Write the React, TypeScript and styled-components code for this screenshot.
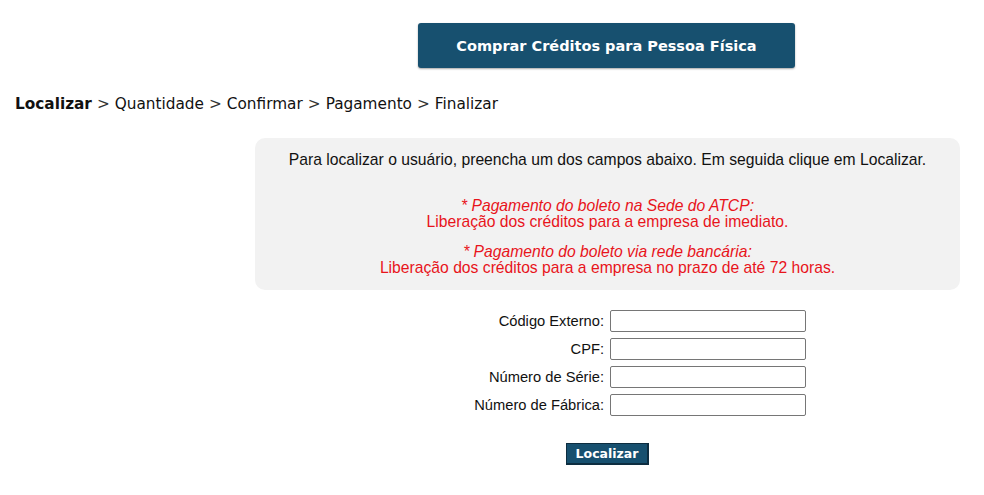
import React from 'react';
import styled, { createGlobalStyle } from 'styled-components';

const GlobalStyle = createGlobalStyle`
	body {
		margin: 0;
		background: #ffffff;
		font-family: 'Liberation Sans', Arial, sans-serif;
	}
`;

const steps = ['Localizar', 'Quantidade', 'Confirmar', 'Pagamento', 'Finalizar'];

const fields = ['Código Externo:', 'CPF:', 'Número de Série:', 'Número de Fábrica:'];

export default function App() {
	return (
		<Page>
			<GlobalStyle />
			<Header>
				<TitleButton type='button'>Comprar Créditos para Pessoa Física</TitleButton>
			</Header>

			<Steps>
				{steps.map((step, i) => (
					<React.Fragment key={step}>
						{i > 0 && <Sep>&gt;</Sep>}
						<Step active={i === 0}>{step}</Step>
					</React.Fragment>
				))}
			</Steps>

			<Content>
				<InfoBox>
					<Intro>Para localizar o usuário, preencha um dos campos abaixo. Em seguida clique em Localizar.</Intro>
					<Notice>
						<em>* Pagamento do boleto na Sede do ATCP:</em>
						<span>Liberação dos créditos para a empresa de imediato.</span>
					</Notice>
					<Notice>
						<em>* Pagamento do boleto via rede bancária:</em>
						<span>Liberação dos créditos para a empresa no prazo de até 72 horas.</span>
					</Notice>
				</InfoBox>

				<Form>
					{fields.map(label => (
						<React.Fragment key={label}>
							<Label>{label}</Label>
							<Input type='text' />
						</React.Fragment>
					))}
				</Form>

				<SubmitButton type='button'>Localizar</SubmitButton>
			</Content>
		</Page>
	);
}

const Page = styled.div`
	width: 984px;
	height: 495px;
	overflow: hidden;
	padding-top: 23px;
	box-sizing: border-box;
`;

const Header = styled.div`
	display: flex;
	justify-content: center;
	margin-left: 255px;
	width: 703px;
`;

const TitleButton = styled.button`
	width: 377px;
	height: 45px;
	background: #17506f;
	color: #ffffff;
	border: none;
	border-radius: 3px;
	box-shadow: 0 1px 2px rgba(0, 0, 0, 0.35);
	font-family: 'DejaVu Sans', Verdana, sans-serif;
	font-weight: bold;
	font-size: 14.5px;
	padding: 0;
	cursor: pointer;
`;

const Steps = styled.div`
	display: flex;
	align-items: baseline;
	gap: 5px;
	padding: 0 15px;
	margin-top: 27px;
	font-family: 'DejaVu Sans', Verdana, sans-serif;
	font-size: 15.3px;
	color: #111111;
`;

const Step = styled.span<{ active?: boolean }>`
	font-weight: ${props => (props.active ? 'bold' : 'normal')};
`;

const Sep = styled.span`
	color: #333333;
`;

const Content = styled.div`
	margin-left: 255px;
	width: 705px;
	margin-top: 25px;
	display: flex;
	flex-direction: column;
	align-items: center;
`;

const InfoBox = styled.div`
	width: 100%;
	box-sizing: border-box;
	background: #f2f2f2;
	border-radius: 10px;
	padding: 14px 10px;
	display: flex;
	flex-direction: column;
	align-items: center;
	font-size: 15.7px;
	line-height: 16px;
`;

const Intro = styled.p`
	margin: 0 0 30px;
	color: #111111;
`;

const Notice = styled.p`
	margin: 0 0 14px;
	color: #e8141b;
	display: flex;
	flex-direction: column;
	align-items: center;

	&:last-child {
		margin-bottom: 0;
	}
`;

const Form = styled.div`
	display: grid;
	grid-template-columns: 349px 196px;
	column-gap: 6px;
	row-gap: 6px;
	margin-top: 20px;
	align-items: center;
	align-self: flex-start;
	font-size: 14.7px;
	color: #111111;
`;

const Label = styled.label`
	text-align: right;
`;

const Input = styled.input`
	height: 22px;
	box-sizing: border-box;
	border: 1px solid #767676;
	border-radius: 2px;
	background: #ffffff;
	padding: 0 4px;
	font-size: 13px;
`;

const SubmitButton = styled.button`
	margin-top: 27px;
	height: 22px;
	padding: 0 9px;
	background: #17506f;
	color: #ffffff;
	border: 1px solid #0d2d40;
	border-right-width: 2px;
	border-bottom-width: 2px;
	font-family: 'DejaVu Sans', Verdana, sans-serif;
	font-weight: bold;
	font-size: 12.5px;
	cursor: pointer;
`;
